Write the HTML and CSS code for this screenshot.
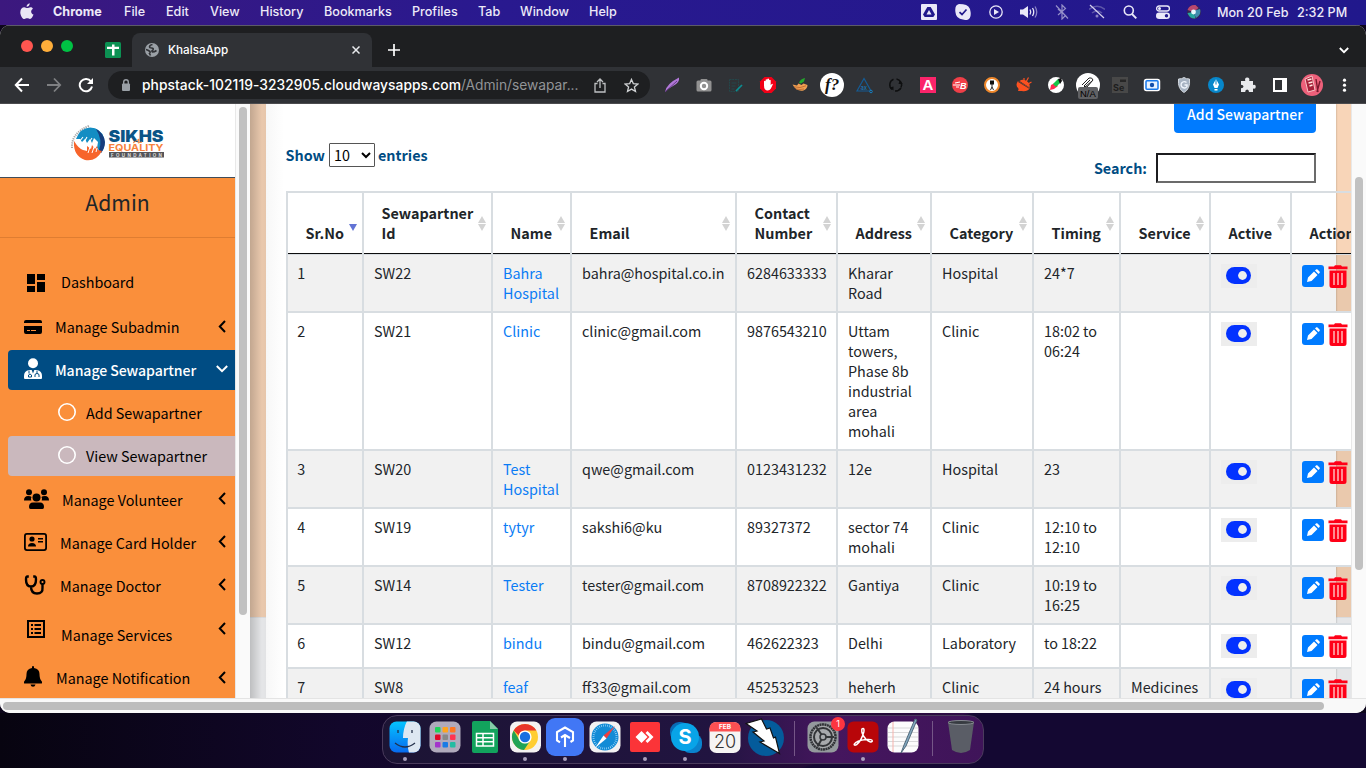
FILE: index.html
```html
<!DOCTYPE html>
<html lang="en">
<head>
<meta charset="utf-8">
<title>KhalsaApp</title>
<link rel="stylesheet" href="styles.css">
</head>
<body>
<svg class="defs" aria-hidden="true">
  <symbol id="pencil" viewBox="0 0 22 22"><rect width="22" height="22" rx="3" fill="#007bff"/><path d="M5 17l1-4.500 6-6 3.500 3.500L9.500 16zM13 5.500l1-1c.5-.5 1-.5 1.500 0l2 2c.5.5.5 1 0 1.500l-1 1z" fill="#fff"/></symbol>
  <symbol id="trash" viewBox="0 0 20 23"><path d="M.5 1.600h5.500l1-1.300h6l1 1.300h5.500v2.600H.5zM1.500 5.500h17v15q0 2.500-2.500 2.500H4q-2.500 0-2.500-2.500z" fill="#ff0017"/><path d="M6 8v12M10 8v12M14 8v12" stroke="#fbb" stroke-width="1.500"/></symbol>
  <symbol id="toggle" viewBox="0 0 25 17"><rect width="25" height="17" rx="8.500" fill="#0332ff"/><circle cx="16.500" cy="8.500" r="4.400" fill="#eee"/></symbol>
  <symbol id="left" viewBox="0 0 8 13"><path d="M7 1L1.800 6.500 7 12" fill="none" stroke="#000" stroke-width="2"/></symbol>
</svg>

<header class="menubar">
  <svg class="apple" width="14" height="17" viewBox="0 0 14 17"><path d="M9.700.2c.2 1.900-1.300 3.600-3.100 3.600C6.400 2 8 .4 9.700.2zM12.900 5.700c-2.600 1.500-2.100 4.800.6 5.900-.7 2-2 4.400-3.500 4.400-1.100 0-1.500-.7-2.800-.7s-1.800.7-2.800.7C2.300 16 .3 12.300.3 9.200c0-3.300 2-4.900 4-4.900 1.200 0 2 .8 3 .8s1.800-.8 3.200-.8c.9 0 1.900.5 2.400 1.400z" fill="#eae6f5"/></svg>
  <nav class="menus"><b class="m1">Chrome</b><span class="m2">File</span><span class="m3">Edit</span><span class="m4">View</span><span class="m5">History</span><span class="m6">Bookmarks</span><span class="m7">Profiles</span><span class="m8">Tab</span><span class="m9">Window</span><span>Help</span></nav>
  <div class="status">
    <svg viewBox="0 0 16 16"><rect width="16" height="16" rx="1" fill="#eae8f8"/><path d="M6.300 3h3.400L14 10.500 12.300 13H3.700L2 10.500z" fill="#21188c"/><path d="M8 6l2.500 4.500h-5z" fill="#eae8f8"/></svg>
    <svg viewBox="0 0 16 16"><path d="M4 0q3 0 4 .3Q15 1 15.600 8q.8 7-3.600 8-2 0-4-.5Q1 15 .4 8-.5 1 4 0z" fill="#eae8f8"/><path d="M4.500 8.200L7 10.500l4.500-5" fill="none" stroke="#21188c" stroke-width="1.700"/></svg>
    <svg viewBox="0 0 16 16"><circle cx="8" cy="8" r="6.200" fill="none" stroke="#eae8f8" stroke-width="1.300"/><path d="M6 5l5 3-5 3z" fill="#eae8f8"/></svg>
    <svg viewBox="0 0 20 16" class="wide"><path d="M1 5.500h3L9 2v12L4 10.500H1z" fill="#eae8f8"/><path d="M11 5.500q1.500 2.500 0 5M13.500 4q2.500 4 0 8" fill="none" stroke="#eae8f8" stroke-width="1.300"/><path d="M16 2.500q3.500 5.500 0 11" fill="none" stroke="#8c85c5" stroke-width="1.300"/></svg>
    <svg viewBox="0 0 16 16"><path d="M4 5l7.500 6.500L8 15V1l3.500 3.500L4 11M2 1.500l12 13" fill="none" stroke="#958fc9" stroke-width="1.200"/></svg>
    <svg viewBox="0 0 16 16"><path d="M0 5.500q8-6.500 16 0M3 9q5-4 10 0" fill="none" stroke="#5e57a9" stroke-width="1.500"/><circle cx="8" cy="12" r="1.500" fill="#8982c3"/><path d="M1 1l14 13" stroke="#d5d1ed" stroke-width="1.200"/></svg>
    <svg viewBox="0 0 16 16"><circle cx="6.800" cy="6.500" r="4.500" fill="none" stroke="#eae8f8" stroke-width="1.600"/><path d="M10 10l4.300 4.300" stroke="#eae8f8" stroke-width="1.900"/></svg>
    <svg viewBox="0 0 16 16"><rect x="1.600" y="2" width="12.800" height="5" rx="2.500" fill="none" stroke="#eae8f8" stroke-width="1.300"/><circle cx="4.500" cy="4.500" r="1.500" fill="#eae8f8"/><rect x="1" y="8.500" width="14" height="6.500" rx="3.200" fill="#eae8f8"/><circle cx="11.500" cy="11.700" r="1.700" fill="#21188c"/></svg>
    <svg viewBox="0 0 16 16"><circle cx="8" cy="8" r="7" fill="#342555"/><path d="M1.500 6q2-5.500 8-5l3 3-5 4z" fill="#b8486f"/><path d="M1.500 9q2 6 8 5.500L8 8z" fill="#26a6a0"/><path d="M14 5q2 5-4 9L7 7z" fill="#3f8cae"/><circle cx="7.500" cy="8" r="2.400" fill="#e8faff"/></svg>
  </div>
  <div class="clock"><span class="date">Mon 20 Feb</span><span class="time">2:32 PM</span></div>
</header>

<main class="window">
  <div class="tabs">
    <div class="lights"><i class="red"></i><i class="amber"></i><i class="green"></i></div>
    <svg class="pin" width="16" height="16" viewBox="0 0 16 16"><rect width="16" height="16" rx="1.500" fill="#0c9153"/><path d="M2 4.800h12v2.200H2zM7 2.500h2.500v11H7z" fill="#fff"/></svg>
    <div class="tab">
      <svg width="14" height="14" viewBox="0 0 14 14"><circle cx="7" cy="7" r="7" fill="#9aa0a6"/><path d="M7.500 1.500q-3 .5-3 2.500 0 1 2 1 2.500 0 1.500 2-2 1-.5 2 2 0 4-1.500M1 6.500q2 .5 4 2 .5 1.500-.5 2l1 2" fill="none" stroke="#303236" stroke-width="1.600"/></svg>
      <span>KhalsaApp</span>
      <svg class="x" width="8" height="8" viewBox="0 0 8 8"><path d="M.5.5l7 7M7.500.5l-7 7" stroke="#e8eaed" stroke-width="1.500"/></svg>
    </div>
    <svg class="plus" width="12" height="12" viewBox="0 0 12 12"><path d="M6 0v12M0 6h12" stroke="#fff" stroke-width="1.700"/></svg>
    <svg class="tabmenu" width="10" height="7" viewBox="0 0 10 7"><path d="M.8 1L5 5.200 9.200 1" fill="none" stroke="#fff" stroke-width="1.800"/></svg>
  </div>
  <div class="toolbar">
    <div class="navs">
      <svg viewBox="0 0 16 16"><path d="M15 8H2M8 1.500L1.800 8 8 14.500" fill="none" stroke="#fff" stroke-width="2"/></svg>
      <svg viewBox="0 0 16 16"><path d="M1 8h13M8 1.500L14.200 8 8 14.500" fill="none" stroke="#7f8083" stroke-width="1.800"/></svg>
      <svg viewBox="0 0 16 16"><path d="M13 4.500A6.200 6.200 0 1 0 14 9.500" fill="none" stroke="#fff" stroke-width="2"/><path d="M15 1v6H9z" fill="#fff"/></svg>
    </div>
    <div class="url">
      <svg width="10" height="12" viewBox="0 0 10 12"><rect x="1" y="4.500" width="8" height="7.500" rx="1" fill="#9aa0a6"/><path d="M2.700 5V3q0-2.200 2.300-2.200T7.300 3v2" fill="none" stroke="#9aa0a6" stroke-width="1.400"/></svg>
      <span class="host">phpstack-102119-3232905.cloudwaysapps.com</span><span class="path">/Admin/sewapar...</span>
      <svg class="share" width="14" height="15" viewBox="0 0 14 15"><path d="M4.500 5.500H2V14h10V5.500H9.500M7 10V1.200M4 4l3-3 3 3" fill="none" stroke="#bfc1c3" stroke-width="1.300"/></svg>
      <svg class="star" width="15" height="15" viewBox="0 0 15 15"><path d="M7.500 1.400l1.800 4.200 4.600.4-3.500 3 1.100 4.500-4-2.400-4 2.400L4.600 9 1.100 6l4.600-.4z" fill="none" stroke="#cfd1d3" stroke-width="1.300"/></svg>
    </div>
    <div class="exts">
      <svg viewBox="0 0 24 24"><path d="M5 19Q6 11 19 4.500q1 5-6 8.500l-5 3z" fill="#b178d8"/><path d="M5 19L17 8" stroke="#673b87"/></svg>
      <svg viewBox="0 0 24 24"><rect x="4.500" y="7.500" width="15" height="11" rx="1.500" fill="#929292"/><rect x="8.500" y="6" width="7" height="3" rx="1" fill="#929292"/><circle cx="12" cy="13" r="3.200" fill="none" stroke="#fff" stroke-width="2"/></svg>
      <svg viewBox="0 0 24 24"><rect x="5.500" y="6.500" width="9" height="12" fill="none" stroke="#24474a" stroke-dasharray="2 .7"/><path d="M7.500 10h5M7.500 13h4M7.500 16h3" stroke="#24474a"/><path d="M12 18l6-6" stroke="#0b8e91" stroke-width="1.700"/></svg>
      <svg viewBox="0 0 24 24"><path d="M8.500 4h7L20 8.500v7L15.500 20h-7L4 15.500v-7z" fill="#f20017"/><path d="M8 12.500V8.200q.8-1 1.600 0V6.800q.9-1 1.700 0V6q.9-.8 1.700 0v1.200q.9-.8 1.700 0v5l1-1.200q1-.5 1.200.3l-2 4.200q-1.200 2-3.200 2-3.700 0-3.700-5z" fill="#fff"/></svg>
      <svg viewBox="0 0 24 24"><path d="M4.500 11.500l4.500 1 1.500-2 3 1.500 2-1.500 4 1.500q0 3.500-4 5.500-7 1.500-11-6z" fill="#f0a052"/><path d="M6 13.800q6 2 12-1M8 16q4 1 8 0" stroke="#b5652e" fill="none" stroke-width=".8"/><path d="M11 10q1-4 6-5l-1 3.500-3 2z" fill="#23a92c"/></svg>
      <svg viewBox="0 0 24 24"><circle cx="12" cy="12" r="12" fill="#fff"/><text x="5" y="17" class="fq">f?</text></svg>
      <svg viewBox="0 0 24 24"><path d="M12 5.500L5 18h14z" fill="none" stroke="#155b93" stroke-width="1.200"/><text x="8.500" y="16.500" class="ax">ax</text><circle cx="19" cy="18.500" r="1.300" fill="#303236" stroke="#1680c3"/></svg>
      <svg viewBox="0 0 24 24"><path d="M9.500 6.300A6 6 0 0 0 8 16.500M12.500 6a6 6 0 0 1 4.500 8.500" fill="none" stroke="#0e0f10" stroke-width="1.500"/><path d="M11 18q4 0 6-3" fill="none" stroke="#0e0f10" stroke-width="1.500"/><path d="M5.500 14.500l4 3V13.500zM19 11l-3.500-3.500-1 3.500z" fill="#0e0f10"/></svg>
      <svg viewBox="0 0 24 24"><rect x="4" y="4" width="16" height="16" fill="#fb246a"/><text x="12" y="17" class="ea">A</text></svg>
      <svg viewBox="0 0 24 24"><circle cx="12" cy="12" r="8" fill="#ef3f48"/><path d="M5 12h7M7 10l5-1M8 14h3" stroke="#fff" stroke-width="1.200"/><text x="12" y="15.500" class="eb">B</text></svg>
      <svg viewBox="0 0 24 24"><circle cx="12" cy="12" r="7" fill="#fff" stroke="#ee872a" stroke-width="2"/><path d="M10 7.500h4v4h-4z" fill="#111"/><path d="M12 11v3l-1.500 3M12 14l1.500 3" fill="none" stroke="#111" stroke-width=".9"/></svg>
      <svg viewBox="0 0 24 24"><path d="M6 8q-3 4 0 7 1 1 0 3h4q5 1 8-3z" fill="#fb5120"/><path d="M6 8.500l11.500 7" stroke="#303236" stroke-width=".8"/><path d="M7.500 8l10 6.500q1-4-3-6.500t-7 0z" fill="#fb5120"/><path d="M14 9l2.500-4.500M16 11l3.500-2M12 7.500V5" stroke="#fb5120" stroke-width="1.200"/></svg>
      <svg viewBox="0 0 24 24"><circle cx="12" cy="12" r="8" fill="#fff"/><path d="M6 17l1-5 4-2 3 3-4 3z" fill="#ff2850"/><path d="M9 11l5-5 3 3-5 5z" fill="#15c546"/><path d="M14 6l3-1 1 3-2 3z" fill="#111"/></svg>
      <svg viewBox="0 0 24 24"><circle cx="12" cy="12" r="12" fill="#fff"/><path d="M6 12l7-7q3-1 4 2l-6 7q-2 1-3-1l6-6M9 14l7-6" stroke="#222" fill="none"/><rect x="2" y="14" width="20" height="12" rx="2" fill="#606164"/><text x="4" y="23.500" class="na">N/A</text></svg>
      <svg viewBox="0 0 24 24"><rect x="4" y="4" width="16" height="16" fill="#484848"/><path d="M12 6.500h6v2.500h-6z" fill="#262626"/><text x="5" y="18" class="se">Se</text></svg>
      <svg viewBox="0 0 24 24"><rect x="4.500" y="6.500" width="15" height="11" rx="2" fill="#fff" stroke="#fff" stroke-width="1.500"/><rect x="6" y="7.800" width="12" height="8.400" rx="1" fill="#e9f3ff" stroke="#1677eb" stroke-width="1.500"/><circle cx="12" cy="12" r="2.200" fill="#144eaa"/></svg>
      <svg viewBox="0 0 24 24"><path d="M6.500 6q3.500 0 5.500-1.500Q14 6 17.500 6 18.500 16 12 19.500 5.500 16 6.500 6z" fill="#a7b3c2" stroke="#d4d9df"/><path d="M14.500 9.500a3.200 3.200 0 1 0 .5 4v-1.500h-2.500" fill="none" stroke="#eef3fa" stroke-width="1.400"/></svg>
      <svg viewBox="0 0 24 24"><circle cx="12" cy="12" r="8" fill="#0787cb"/><path d="M12 6l3 5.500-1.500 3.500h-3L9 11.500zM10.500 16h3v1.500h-3z" fill="#fff"/><path d="M12 6v5.500" stroke="#0787cb"/></svg>
      <svg viewBox="0 0 24 24"><path d="M5 8h4.300q-1-3.500 1.900-3.500T13.200 8H17v4q2.800-.8 2.800 1.700T17 15.500V19h-4q0-2.500-1.900-2.500T9.200 19H5v-3.700q2.500 0 2.500-1.800T5 11.700z" fill="#e8eaed"/></svg>
      <svg viewBox="0 0 24 24"><path d="M6 6h12v12H6z" fill="none" stroke="#fff" stroke-width="2"/><path d="M14 5h5v14h-5z" fill="#fff"/></svg>
      <svg viewBox="0 0 24 24"><circle cx="12" cy="12" r="11" fill="#ed607a"/><path d="M5 6l7-3 3 14-7 2z" fill="#a7213a" stroke="#f5c4c5"/><path d="M7.500 7l4-1M8.500 10l4-1M9.500 13l3-1" stroke="#ffe6df" stroke-width="1.500"/><path d="M16 6l2 13M20 8l-3 11" stroke="#791a2d" stroke-width="1.400"/></svg>
      <svg viewBox="0 0 24 24"><g fill="#fff"><circle cx="12.500" cy="7.200" r="1.600"/><circle cx="12.500" cy="12.200" r="1.600"/><circle cx="12.500" cy="17.200" r="1.600"/></g></svg>
    </div>
  </div>

  <div class="page">
    <aside class="sidebar">
      <div class="brand">
        <svg width="95" height="38" viewBox="0 0 95 38"><path d="M2 24Q1 9 19 2" fill="none" stroke="#a5a5a5" stroke-width="2" stroke-dasharray="1.200 1"/><path d="M6 15Q10 4 20 3.500 31 4 34 14q2 9-3 15l-4-5 1-6-4-4-2 5-2-4-3 4-2-4-3 3-2-3z" fill="#138dc3"/><path d="M26 5q8 4 9 13 0 6-4 11l-2-3q4-10-3-21z" fill="#163d7d"/><path d="M4 17q-1 15 11 19 11 2 17-9l-4-1-1-4-2 3-3-4-1 4-4-3v5l-4-1q-4-1-9-9z" fill="#f7642b"/><path d="M9 18l4-5M13 20l4-7M18 20l4-6" stroke="#fff" stroke-width="1.100"/><path d="M18 29l2-6M22 29l2-6M26 28l1-4" stroke="#fff"/><text x="38.500" y="17.500" class="lg1" textLength="55" lengthAdjust="spacingAndGlyphs">SIKHS</text><text x="38.500" y="27" class="lg2" textLength="55" lengthAdjust="spacingAndGlyphs">EQUALITY</text><path d="M63 19l6-4-1 4 4-1" fill="none" stroke="#f58235"/><rect x="39" y="28" width="55" height="5.500" fill="#555559"/><text x="41" y="32.500" class="lg3" textLength="51">FOUNDATION</text></svg>
      </div>
      <div class="admin">Admin</div>
      <nav class="side">
        <a class="item dash"><svg width="18" height="18" viewBox="0 0 18 18"><path d="M0 0h8v10H0zM10 0h8v6h-8zM0 12h8v6H0zM10 8h8v10h-8z"/></svg><span>Dashboard</span></a>
        <a class="item sub"><svg width="18" height="14" viewBox="0 0 18 14"><path d="M2 0h14q2 0 2 2v1H0V2q0-2 2-2zM0 6h18v6q0 2-2 2H2q-2 0-2-2z"/><path d="M3 10.500h3M7 10.500h5" stroke="#fa8f3b"/></svg><span>Manage Subadmin</span><svg class="chev"><use href="#left"/></svg></a>
        <a class="item active"><svg width="18" height="21" viewBox="0 0 18 21"><circle cx="9" cy="5.300" r="5" fill="#fff"/><path d="M0 20v-2q0-5 5-6h8q5 1 5 6v2q0 1-1 1H1q-1 0-1-1z" fill="#fff"/><path d="M7.700 12h2.600L9 15.500z" fill="#004c83"/><path d="M5 12.500v3M13 12.500v3M4.500 19v-2l1.500-1 1.500 1v2zM11 19v-2q0-1.500 2-1.500t2 1.500v2" fill="none" stroke="#004c83"/></svg><span>Manage Sewapartner</span><svg class="down" width="12" height="8" viewBox="0 0 12 8"><path d="M.8 1L6 6.200 11.200 1" fill="none" stroke="#fff" stroke-width="2"/></svg></a>
        <a class="item child"><i class="ring"></i><span>Add Sewapartner</span></a>
        <a class="item child current"><i class="ring"></i><span>View Sewapartner</span></a>
        <a class="item vol"><svg width="25" height="20" viewBox="0 0 25 20"><circle cx="5" cy="3.200" r="3"/><circle cx="20" cy="3.200" r="3"/><circle cx="12.500" cy="8.500" r="4"/><path d="M0 11.500q0-4.500 4-4.500 3 0 3.500 1-1 1.500-.2 3.500zM25 11.500q0-4.500-4-4.500-3 0-3.500 1 1 1.500.2 3.500zM5 18q0-4.500 4-4.500h7q4 0 4 4.500 0 2-1.500 2h-12Q5 20 5 18z"/></svg><span>Manage Volunteer</span><svg class="chev"><use href="#left"/></svg></a>
        <a class="item card"><svg width="23" height="18" viewBox="0 0 23 18"><rect x=".9" y=".9" width="21.200" height="16.200" rx="2" fill="none" stroke="#000" stroke-width="1.800"/><circle cx="8" cy="6" r="2.600"/><path d="M4 13.500q0-3.500 4-3.500t4 3.500zM14 5h5v1.500h-5zM14 8h5v1.500h-5z"/></svg><span>Manage Card Holder</span><svg class="chev"><use href="#left"/></svg></a>
        <a class="item doc"><svg width="22" height="20" viewBox="0 0 22 20"><path d="M4.800 1.500H3.500Q2 1.500 2 4.500q0 7 5 7t5-7q0-3-1.500-3H9.200M7 11.500q0 7 6 7t5.500-6V9" fill="none" stroke="#000" stroke-width="2.400"/><circle cx="18.500" cy="7" r="2" fill="none" stroke="#000" stroke-width="1.900"/></svg><span>Manage Doctor</span><svg class="chev"><use href="#left"/></svg></a>
        <a class="item serv"><svg width="18" height="18" viewBox="0 0 18 18"><path d="M1 1h16v16H1z" fill="none" stroke="#000" stroke-width="2"/><path d="M4 4h2v2H4zM7.500 4H14v2H7.500zM4 8h2v2H4zM7.500 8H14v2H7.500zM4 12h2v2H4zM7.500 12H14v2H7.500z"/></svg><span>Manage Services</span><svg class="chev"><use href="#left"/></svg></a>
        <a class="item note"><svg width="18" height="21" viewBox="0 0 18 21"><path d="M8 2V1q0-1 1-1t1 1v1q5.500 1 5.500 6 0 5 2 7 1 1 .3 2.500H.2Q-.5 16 .5 15q2-2 2-7 0-5 5.500-6zM6.500 18.500h5q-.5 2.200-2.500 2.200t-2.500-2.200z"/></svg><span>Manage Notification</span><svg class="chev"><use href="#left"/></svg></a>
      </nav>
    </aside>
    <div class="sidescroll"><i></i></div>
    <div class="gutter"></div>
    <section class="content">
      <div class="panel">
        <div class="top"><button class="add">Add Sewapartner</button></div>
        <div class="filters">
          <div class="show">Show <span class="select">10<svg width="10" height="7" viewBox="0 0 10 7"><path d="M1 1l4 4 4-4" fill="none" stroke="#000" stroke-width="2"/></svg></span> entries</div>
          <div class="search">Search: <i></i></div>
        </div>
        <table>
          <colgroup><col class="c1"><col class="c2"><col class="c3"><col class="c4"><col class="c5"><col class="c6"><col class="c7"><col class="c8"><col class="c9"><col class="c10"><col class="c11"></colgroup>
          <thead><tr><th class="asc">Sr.No</th><th>Sewapartner<br>Id</th><th>Name</th><th>Email</th><th>Contact<br>Number</th><th>Address</th><th>Category</th><th>Timing</th><th>Service</th><th>Active</th><th>Action</th></tr></thead>
          <tbody>
            <tr><td>1</td><td>SW22</td><td><a>Bahra<br>Hospital</a></td><td>bahra@hospital.co.in</td><td>6284633333</td><td>Kharar<br>Road</td><td>Hospital</td><td>24*7</td><td></td><td><span class="tog"><svg><use href="#toggle"/></svg></span></td><td><span class="acts"><svg class="pen"><use href="#pencil"/></svg><svg class="bin"><use href="#trash"/></svg></span></td></tr>
            <tr class="tall"><td>2</td><td>SW21</td><td><a>Clinic</a></td><td>clinic@gmail.com</td><td>9876543210</td><td>Uttam<br>towers,<br>Phase 8b<br>industrial<br>area<br>mohali</td><td>Clinic</td><td>18:02 to<br>06:24</td><td></td><td><span class="tog"><svg><use href="#toggle"/></svg></span></td><td><span class="acts"><svg class="pen"><use href="#pencil"/></svg><svg class="bin"><use href="#trash"/></svg></span></td></tr>
            <tr><td>3</td><td>SW20</td><td><a>Test<br>Hospital</a></td><td>qwe@gmail.com</td><td>0123431232</td><td>12e</td><td>Hospital</td><td>23</td><td></td><td><span class="tog"><svg><use href="#toggle"/></svg></span></td><td><span class="acts"><svg class="pen"><use href="#pencil"/></svg><svg class="bin"><use href="#trash"/></svg></span></td></tr>
            <tr><td>4</td><td>SW19</td><td><a>tytyr</a></td><td>sakshi6@ku</td><td>89327372</td><td>sector 74<br>mohali</td><td>Clinic</td><td>12:10 to<br>12:10</td><td></td><td><span class="tog"><svg><use href="#toggle"/></svg></span></td><td><span class="acts"><svg class="pen"><use href="#pencil"/></svg><svg class="bin"><use href="#trash"/></svg></span></td></tr>
            <tr><td>5</td><td>SW14</td><td><a>Tester</a></td><td>tester@gmail.com</td><td>8708922322</td><td>Gantiya</td><td>Clinic</td><td>10:19 to<br>16:25</td><td></td><td><span class="tog"><svg><use href="#toggle"/></svg></span></td><td><span class="acts"><svg class="pen"><use href="#pencil"/></svg><svg class="bin"><use href="#trash"/></svg></span></td></tr>
            <tr class="short"><td>6</td><td>SW12</td><td><a>bindu</a></td><td>bindu@gmail.com</td><td>462622323</td><td>Delhi</td><td>Laboratory</td><td>to 18:22</td><td></td><td><span class="tog"><svg><use href="#toggle"/></svg></span></td><td><span class="acts"><svg class="pen"><use href="#pencil"/></svg><svg class="bin"><use href="#trash"/></svg></span></td></tr>
            <tr class="short"><td>7</td><td>SW8</td><td><a>feaf</a></td><td>ff33@gmail.com</td><td>452532523</td><td>heherh</td><td>Clinic</td><td>24 hours</td><td>Medicines</td><td><span class="tog"><svg><use href="#toggle"/></svg></span></td><td><span class="acts"><svg class="pen"><use href="#pencil"/></svg><svg class="bin"><use href="#trash"/></svg></span></td></tr>
          </tbody>
        </table>
      </div>
    </section>
    <div class="pagescroll"><i></i></div>
  </div>
  <div class="hscroll"><i></i></div>
</main>

<footer class="desktop">
  <div class="dock">
    <div class="app run"><svg viewBox="0 0 40 40"><defs><linearGradient id="gf" x2="0" y2="1"><stop stop-color="#05c5ff"/><stop offset="1" stop-color="#0768ee"/></linearGradient><clipPath id="cf"><rect x="4.500" y="4.500" width="31" height="31" rx="7"/></clipPath></defs><g clip-path="url(#cf)"><path d="M4 4h32v32H4z" fill="url(#gf)"/><path d="M22 4q-4 8-4 17h5q-1 8 1 15h13V4z" fill="#dde7f1"/></g><path d="M13 13v3M27 13v3M10 26q10 8 20 0" fill="none" stroke="#222e48" stroke-width="1.300"/></svg></div>
    <div class="app"><svg viewBox="0 0 40 40"><rect x="4.500" y="4.500" width="31" height="31" rx="7" fill="#b0aabc"/><g><rect x="10" y="10" width="5.500" height="5.500" rx="1" fill="#1fd45b"/><rect x="17.500" y="10" width="5.500" height="5.500" rx="1" fill="#ffa51e"/><rect x="25" y="10" width="5.500" height="5.500" rx="1" fill="#ff7522"/><rect x="10" y="17.500" width="5.500" height="5.500" rx="1" fill="#df0728"/><rect x="17.500" y="17.500" width="5.500" height="5.500" rx="1" fill="#888"/><rect x="25" y="17.500" width="5.500" height="5.500" rx="1" fill="#ff3452"/><rect x="10" y="25" width="5.500" height="5.500" rx="1" fill="#a334cb"/><rect x="17.500" y="25" width="5.500" height="5.500" rx="1" fill="#197be5"/><rect x="25" y="25" width="5.500" height="5.500" rx="1" fill="#23bca2"/></g></svg></div>
    <div class="app"><svg viewBox="0 0 40 40"><path d="M9 4h16l8 8v22q0 2-2 2H9q-2 0-2-2V6q0-2 2-2z" fill="#12a35d"/><path d="M25 4l8 8h-8z" fill="#86cba9"/><path d="M11.500 16.500h17v12.500h-17zM11.500 20.700h17M11.500 24.800h17M18 16.500v12.500" fill="none" stroke="#fff" stroke-width="1.500"/></svg></div>
    <div class="app run"><svg viewBox="0 0 40 40"><rect x="5" y="4.500" width="31" height="31" rx="7" fill="#f4f2f2"/><circle cx="20" cy="20" r="13" fill="#ffcd32"/><path d="M8.700 13.500A13 13 0 0 1 31.300 13.500H20a6.500 6.500 0 0 0-6 5z" fill="#e8352b"/><path d="M8.700 13.500A13 13 0 0 0 19 33l6-9a6.500 6.500 0 0 1-10.600-1z" fill="#21a356"/><circle cx="20" cy="20" r="6.600" fill="#fff"/><circle cx="20" cy="20" r="5.200" fill="#176fe0"/></svg></div>
    <div class="app run"><svg viewBox="0 0 40 40"><rect x="1" y="1" width="38" height="38" rx="9" fill="#4177f5"/><path d="M15 25.300l-3-1.800v-8.300l8-4.700 8 4.700v8.300l-2.500 1.500M16 20.500l4-2.500 5 3M20 18v12" fill="none" stroke="#fff" stroke-width="2.100"/></svg></div>
    <div class="app"><svg viewBox="0 0 40 40"><rect x="4.500" y="4.500" width="31" height="31" rx="7" fill="#f2f1f2"/><circle cx="20" cy="20" r="13.500" fill="#128bd6"/><circle cx="20" cy="20" r="11.500" fill="none" stroke="#b1e2ff" stroke-width="2" stroke-dasharray=".6 1.400"/><path d="M30 9l-8.500 12.500-3-3z" fill="#f03e3e"/><path d="M10 31l8.500-12.500 3 3z" fill="#fff"/></svg></div>
    <div class="app run"><svg viewBox="0 0 40 40"><rect x="5" y="5" width="30" height="30" rx="2" fill="#fb3438"/><path d="M10.500 20l6-6 6 6-6 6zM20.500 16l2-2 6 6-6 6-2-2 4-4z" fill="#fff"/></svg></div>
    <div class="app run"><svg viewBox="0 0 40 40"><rect x="5" y="5" width="20" height="20" rx="9" fill="#096bb5"/><rect x="17" y="17" width="20" height="19" rx="8" fill="#0a83cd"/><circle cx="20" cy="20" r="14" fill="#08a4e8"/><text x="20" y="27" class="sk">S</text></svg></div>
    <div class="app"><svg viewBox="0 0 40 40"><rect x="4.500" y="5" width="31" height="31" rx="7" fill="#f6f4f3"/><path d="M4.500 14.500V12q0-7 7-7h17q7 0 7 7v2.500z" fill="#fc5052"/><text x="20" y="12" class="feb">FEB</text><text x="20" y="31" class="day">20</text></svg></div>
    <div class="app"><svg viewBox="0 0 40 40"><circle cx="21" cy="21" r="18" fill="#045b9b"/><path d="M1 6.500L16.500 2 21.500 12l3.500-1 3.500 10 2-1L34.500 36.500 15 25l4-1-11-9 4-1z" fill="#fff" stroke="#111" stroke-width="1.200"/></svg></div>
    <i class="sep"></i>
    <div class="app prefs"><svg viewBox="0 0 40 40"><rect x="4.500" y="4.500" width="31" height="31" rx="7" fill="#94999d"/><circle cx="20" cy="20" r="12.500" fill="#a7a9ac" stroke="#303236" stroke-width="2.500" stroke-dasharray="2 .5"/><circle cx="20" cy="20" r="9" fill="none" stroke="#333538" stroke-width="2"/><circle cx="20" cy="20" r="3" fill="none" stroke="#333538" stroke-width="1.500"/><path d="M23 20h8M18.500 17.500l-5-7M18.500 22.500l-4 7" stroke="#333538" stroke-width="2"/></svg><b class="badge">1</b></div>
    <div class="app run"><svg viewBox="0 0 40 40"><rect x="4.500" y="4.500" width="31" height="31" rx="6" fill="#b80609"/><path d="M20 11.500q1.500 0 .8 3.500-2 8-7 12.500-3 1.500-2.500-.5 2-3.500 12-4.500 6-.5 6 1.500-1.500 2.500-6.500-2-4.500-5-4-9.500 0-1 1.200-1z" fill="none" stroke="#fff" stroke-width="1.500"/></svg></div>
    <div class="app"><svg viewBox="0 0 40 40"><rect x="4.500" y="4.500" width="31" height="31" rx="7" fill="#fcfcfc"/><path d="M5 11h30M5 15.500h30M5 20h30M5 24.500h30M5 29h30" stroke="#d8d8d9"/><path d="M10 5v30" stroke="#f6b2ac"/><path d="M18 36l3-8L32 2l2 1-11 26z" fill="#82a9c1" stroke="#52697a"/></svg></div>
    <i class="sep"></i>
    <div class="app"><svg viewBox="0 0 40 40"><path d="M7 5l4 28q9 6 18 0l4-28z" fill="#5a5d66"/><ellipse cx="20" cy="5.500" rx="13" ry="2" fill="#373b41" stroke="#858990"/></svg></div>
  </div>
</footer>
</body>
</html>
```
FILE: styles.css
```css
* { box-sizing: border-box; }
body { margin: 0; width: 1366px; height: 768px; overflow: hidden; display: flex; flex-direction: column; background: #0d061b; font-family: "Noto Sans CJK SC", "Noto Sans", sans-serif; font-size: 14.36px; color: #212529; }
svg { display: block; flex: none; }
.defs { position: absolute; width: 0; height: 0; }

/* system menu bar */
.menubar { flex: none; height: 25px; display: flex; align-items: center; padding-left: 20px; background: linear-gradient(90deg, #3c187e, #29198f 36%, #21188c); color: #edeaf8; font: 500 12.6px/25px Inter, sans-serif; }
.apple { margin-top: -2px; }
.menus { display: flex; margin-left: 19px; height: 25px; line-height: 24px; }
.m1 { width: 71px; } .m2 { width: 42px; } .m3 { width: 44px; } .m4 { width: 50px; } .m5 { width: 64px; } .m6 { width: 88px; } .m7 { width: 66px; } .m8 { width: 42px; } .m9 { width: 69px; }
.status { display: flex; align-items: center; gap: 17px; margin-left: auto; padding-bottom: 1px; }
.status svg { width: 16px; height: 16px; }
.status .wide { width: 20px; margin: 0 -2px; }
.status svg:first-child { margin-right: 1px; }
.status svg:nth-child(n+6):nth-child(-n+8) { transform: translateX(2px); }
.clock { display: flex; margin-left: 15px; width: 149px; line-height: 24px; white-space: nowrap; }
.date { width: 80px; }

/* browser window */
.window { flex: none; height: 688px; display: flex; flex-direction: column; background: #f9f9f9; border-radius: 10px; overflow: hidden; }
.tabs { flex: none; height: 42px; background: #1e1f21; display: flex; align-items: flex-end; border-top: 1px solid #5c5b68; }
.lights { display: flex; gap: 8px; margin: 0 0 15px 21px; }
.lights i { width: 12px; height: 12px; border-radius: 50%; }
.red { background: #ff5650; } .amber { background: #ffae3a; } .green { background: #00c244; }
.pin { margin: 0 11px 9px 32px; }
.tab { width: 240px; height: 34px; background: #303236; border-radius: 8px 8px 0 0; display: flex; align-items: center; padding: 0 12px 0 13px; color: #fff; font: 500 11.7px/34px Inter, sans-serif; }
.tab span { margin-left: 9px; }
.tab .x { margin-left: auto; }
.plus { margin: 0 0 11px 16px; }
.tabmenu { margin: 0 17px 13px auto; }
.toolbar { flex: none; height: 37px; background: #303236; border-bottom: 1px solid #4b4b4e; display: flex; align-items: center; }
.navs { display: flex; gap: 16px; padding-left: 14px; width: 108px; }
.navs svg { width: 16px; height: 16px; }
.url { width: 542px; height: 28px; border-radius: 14px; background: #1e1f21; display: flex; align-items: center; padding: 0 11px 0 13px; font: 500 13.8px/28px Inter, sans-serif; }
.host { color: #fff; margin-left: 11px; width: 319px; white-space: nowrap; letter-spacing: .06px; }
.path { color: #929497; width: 118px; white-space: nowrap; font-weight: 400; letter-spacing: -.02px; }
.share { margin-left: 14px; }
.star { margin-left: auto; }
.exts { display: flex; gap: 8px; margin-left: 10px; }
.exts svg { width: 24px; height: 24px; overflow: visible; }
.fq { font: italic 700 17px "Liberation Serif", serif; fill: #111; }
.ax { font: 6px Inter, sans-serif; fill: #1680c3; }
.ea { font: 700 15px "Liberation Sans", sans-serif; fill: #fff; text-anchor: middle; }
.eb { font: italic 700 9px "Liberation Sans", sans-serif; fill: #fff; }
.na { font: 9.5px "Liberation Sans", sans-serif; fill: #000; }
.se { font: 700 9px Inter, sans-serif; fill: #1e1e1e; }

/* page */
.page { flex: none; height: 594px; display: flex; overflow: hidden; background: linear-gradient(#f8d5b8 513px, #d9dadd 513px, #f3f4f6 514px); }
.sidebar { flex: none; width: 235px; background: #fa8f3b; overflow: hidden; }
.brand { height: 74px; background: #fff; border-bottom: 1px solid #414c58; padding: 20px 0 0 70px; }
.lg1 { font: 900 16.500px Inter, sans-serif; fill: #0a5587; }
.lg2 { font: 700 9px Inter, sans-serif; fill: #f7823c; }
.lg3 { font: 700 4.500px Inter, sans-serif; fill: #ddd; }
.admin { height: 60px; line-height: 48px; text-align: center; font-size: 21.200px; border-bottom: 1px solid #df7d31; }
.side { padding: 25px 0 0 8px; }
.item { display: flex; align-items: center; height: 40px; margin-bottom: 3px; padding-left: 16px; border-radius: 4px 0 0 4px; color: #000; fill: #000; white-space: nowrap; }
.item span { line-height: 22px; }
.chev { width: 8px; height: 13px; margin-left: auto; margin-right: 9px; margin-top: -1px; }
.dash { padding-left: 19px; margin-bottom: 4px; }
.dash span { margin: -2px 0 0 16px; }
.sub span { margin-left: 13px; }
.sub .chev { margin-top: -2px; }
.active { background: #004c83; color: #fff; font-weight: 500; font-size: 14.1px; letter-spacing: -.08px; }
.active span { margin-left: 13px; }
.active svg:first-child { margin-top: -3px; }
.down { margin-left: auto; margin-right: 7px; margin-top: -2px; }
.child { padding-left: 50px; }
.ring { width: 18px; height: 18px; margin-top: -3px; border-radius: 50%; box-shadow: inset 0 0 0 1.600px #fff; }
.child span { margin-left: 10px; }
.current { background: #cab8bd; }
.vol span { margin: 2px 0 0 13px; }
.card span { margin: 2px 0 0 13px; }
.card svg:first-child, .doc svg:first-child { margin-top: -1px; }
.doc span { margin: 2px 0 0 14px; }
.serv { padding-left: 19px; margin-bottom: 9px; }
.serv span { margin: 14px 0 0 16px; }
.serv .chev { margin-top: 0; }
.serv svg:first-child { margin-top: 2px; }
.note span { margin: 2px 0 0 14px; }
.note svg:first-child { margin-top: -2px; }
.note .chev { margin-top: 0; }
.sidescroll { flex: none; width: 15px; background: #fafafa; padding: 3px 3px 0 3px; border-left: 1px solid #e8e8e8; }
.sidescroll i { display: block; height: 508px; width: 8px; border-radius: 4px; background: #c1c1c1; }
.gutter { flex: none; width: 16px; background: linear-gradient(90deg, rgba(0,0,0,.22), rgba(0,0,0,.06) 75%, rgba(0,0,0,.07)); }
.content { flex: none; width: 1085px; overflow: hidden; }
.panel { width: 1070px; height: 600px; padding-left: 20px; background: linear-gradient(90deg, #f7f7f7, #fff 18px); box-shadow: 0 0 2px rgba(0,0,0,.3); }
.top { height: 29px; display: flex; justify-content: flex-end; padding-right: 20px; overflow: hidden; align-items: flex-end; }
.add { width: 142px; height: 38px; border: 0; border-radius: 4px; background: #007bff; color: #fff; font: 500 14px/34px "Noto Sans CJK SC", sans-serif; padding: 0; }
.filters { height: 58px; display: flex; justify-content: space-between; padding: 10px 20px 0 0; color: #004c83; font-weight: 700; }
.show { display: flex; height: 24px; line-height: 24px; margin-left: -.5px; }
.select { width: 46px; height: 24px; margin: 0 3px 0 4px; border: 1px solid #555; border-radius: 1px; background: #fff; color: #000; font-weight: 400; display: flex; align-items: center; justify-content: space-between; padding: 0 3px 0 4px; }
.search { display: flex; height: 30px; margin-top: 10px; line-height: 29px; }
.search i { width: 160px; height: 30px; margin-left: 9px; border: 2px solid; border-color: #1c1c1f #6b6b6b #6b6b6b #1c1c1f; background: #fff; }

table { table-layout: fixed; width: 1110px; border-collapse: separate; border-spacing: 0; border: 2px solid #d8dde1; border-right: 0; }
.c1 { width: 76px; } .c2 { width: 129px; } .c3 { width: 79px; } .c4 { width: 165px; } .c5 { width: 101px; } .c6 { width: 94px; } .c7 { width: 102px; } .c8 { width: 87px; } .c9 { width: 90px; } .c10 { width: 81px; } .c11 { width: 104px; }
th { position: relative; height: 62px; padding: 0 0 11px 17.6px; text-align: left; vertical-align: bottom; line-height: 20px; font-weight: 700; border-right: 2px solid #d8dde1; border-bottom: 1px solid #d8dde1; box-shadow: inset 0 -1px #0c0c0d; white-space: nowrap; }
th::before, th::after { content: ""; position: absolute; right: 5.500px; border: 4px solid transparent; }
th::before { top: 19px; border-bottom: 7px solid #d3d3d3; }
th::after { top: 31px; border-top: 7px solid #d3d3d3; }
th.asc::before { display: none; }
th.asc::after { border-top-color: #6273d5; }
th:last-child::before, th:last-child::after { display: none; }
tr { height: 58px; }
tr.tall { height: 138px; }
tr.short { height: 44px; }
td { padding: 8px 0 0 10px; vertical-align: top; line-height: 20px; border-right: 2px solid #d8dde1; border-bottom: 2px solid #d8dde1; white-space: nowrap; }
tbody tr:nth-child(odd) { background: rgba(0,0,0,.055); }
tbody tr:nth-child(even) { background: #fff; }
td:first-child { padding-left: 9.300px; }
td a { color: #0a7cf5; }
.tog { display: flex; align-items: center; width: 36px; height: 24px; padding-left: 5px; margin-top: 1px; background: #ededed; }
.tog svg { width: 25px; height: 17px; margin-top: -1px; }
.acts { display: flex; gap: 4px; }
.pen { width: 22px; height: 22px; margin-top: 2px; }
.bin { width: 20px; height: 23px; margin-top: 2px; }
.pagescroll { flex: none; width: 15px; background: #fafafa; padding: 73px 0 0 3px; border-left: 1px solid #e8e8e8; }
.pagescroll i { display: block; width: 8px; height: 393px; border-radius: 4px; background: #c1c1c1; }
.hscroll { flex: none; height: 15px; padding: 3px 0 0 3px; background: #f9f9f9; border-top: 1px solid #e4e4e4; }
.hscroll i { display: block; width: 1321px; height: 8px; border-radius: 4px; background: #bdbdbd; }

/* dock */
.desktop { flex: none; height: 55px; padding: 2px 0 0 382px; background: linear-gradient(162deg, transparent 63%, #140832 63.500%), linear-gradient(90deg, #070410, #12072b 25%, #18092f 45%, #250a39 65%, #3c1158 78%, #28114c 88%, #110627); }
.dock { width: 602px; height: 49px; padding-left: 2px; border: 1px solid #4a3b5c; border-radius: 15px; display: flex; background: linear-gradient(90deg, #1c1434, #211440 55%, #45165e 75%, #3f1459); }
.app { position: relative; width: 40px; height: 46px; flex: none; padding-top: 1px; }
.app svg { width: 40px; height: 40px; }
.run::after { content: ""; position: absolute; left: 18px; bottom: 1px; width: 4px; height: 4px; border-radius: 50%; background: #aaa0bd; }
.sep { width: 1px; height: 35px; margin: 5px 8px 0 9px; background: #755687; flex: none; }
.sk { font: 700 20px Inter, sans-serif; fill: #fff; text-anchor: middle; }
.feb { font: 700 6.500px Inter, sans-serif; fill: #fff; text-anchor: middle; }
.day { font: 300 18px Inter, sans-serif; fill: #333; text-anchor: middle; }
.badge { position: absolute; right: -2px; top: 1px; width: 14px; height: 14px; border-radius: 50%; background: #fc3540; color: #fff; text-align: center; font: 9px/14px Inter, sans-serif; }
```
